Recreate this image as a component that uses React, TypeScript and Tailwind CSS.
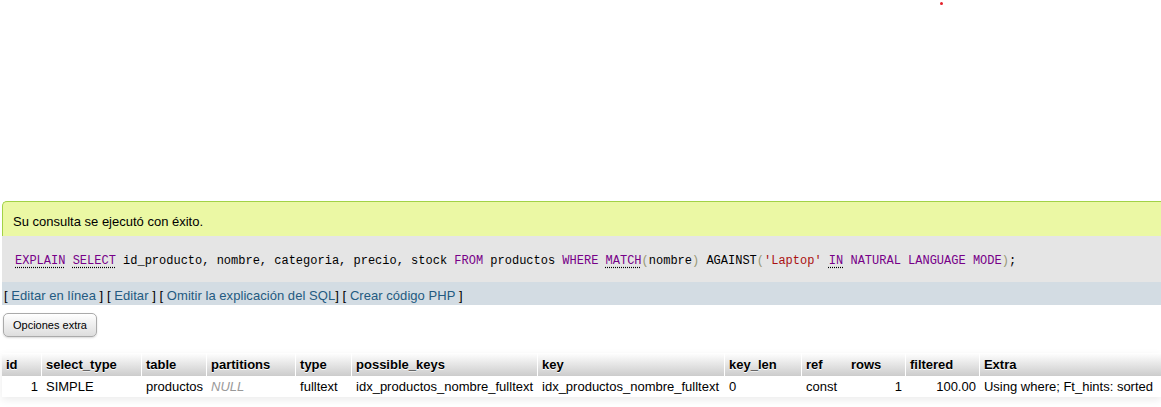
export default function App() {
  const kw = "text-[#770088]";
  const doc = "text-[#770088] underline decoration-dotted decoration-black underline-offset-[3px]";
  const cols: { name: string; w: number; sep: boolean }[] = [
    { name: "id", w: 40, sep: true },
    { name: "select_type", w: 100, sep: true },
    { name: "table", w: 65, sep: true },
    { name: "partitions", w: 89, sep: true },
    { name: "type", w: 56, sep: true },
    { name: "possible_keys", w: 186, sep: true },
    { name: "key", w: 187, sep: true },
    { name: "key_len", w: 77, sep: true },
    { name: "ref", w: 45, sep: false },
    { name: "rows", w: 59, sep: true },
    { name: "filtered", w: 74, sep: true },
    { name: "Extra", w: 181, sep: false },
  ];

  return (
    <div className="relative h-[407px] w-[1161px] overflow-hidden bg-white font-['Liberation_Sans',Arial,sans-serif] text-[13px] text-black">
      {/* stray red dot */}
      <div className="absolute left-[940px] top-[2px] h-[3px] w-[3px] rounded-full bg-[#e4222b]" />

      <div className="pt-[201px]">
        <div className="ml-[2px] w-[1175px]">
          {/* Success message */}
          <div className="h-[35px] rounded-tl-[5px] border-l border-t border-[#a2d246] bg-[#ebf8a4] px-[10px] pt-[12px] leading-[15px]">
            Su consulta se ejecutó con éxito.
          </div>

          {/* SQL */}
          <div className="h-[46px] bg-[#e5e5e5] pl-[13px] pt-[17px] font-['Liberation_Mono',monospace] text-[12px] leading-[16px] whitespace-pre text-black">
            <span>
              <span className={doc}>EXPLAIN</span> <span className={doc}>SELECT</span> id_producto, nombre,
              categoria, precio, stock <span className={kw}>FROM</span> productos{" "}
              <span className={kw}>WHERE</span> <span className={doc}>MATCH</span>
              <span className="text-[#999977]">(</span>nombre<span className="text-[#999977]">)</span> AGAINST
              <span className="text-[#999977]">(</span>
              <span className="text-[#aa1111]">'Laptop'</span> <span className={doc}>IN</span>{" "}
              <span className={kw}>NATURAL</span> <span className={kw}>LANGUAGE</span>{" "}
              <span className={kw}>MODE</span>
              <span className="text-[#999977]">)</span>;
            </span>
          </div>

          {/* Tools */}
          <div className="h-[23px] bg-[#d3dce3] pl-[2px] pt-[6px] leading-[15px] whitespace-pre tracking-[0.05px]">
            [ <span className="text-[#235a81]">Editar en línea</span> ] [{" "}
            <span className="text-[#235a81]">Editar</span> ] [{" "}
            <span className="text-[#235a81]">Omitir la explicación del SQL</span>] [{" "}
            <span className="text-[#235a81]">Crear código PHP</span> ]
          </div>
        </div>

        {/* Options button */}
        <div className="ml-[3px] mt-[8px]">
          <button className="h-[24px] w-[94px] rounded-[5px] border border-[#aaaaaa] bg-linear-to-b from-white to-[#dddddd] text-[11px] shadow-[0_1px_2px_rgba(0,0,0,0.15)]">
            Opciones extra
          </button>
        </div>

        {/* Result table */}
        <table className="ml-[2px] mt-[16px] table-fixed border-separate border-spacing-0 shadow-[0_3px_8px_rgba(0,0,0,0.08)]">
          <colgroup>
            {cols.map((c) => (
              <col key={c.name} style={{ width: c.w }} />
            ))}
          </colgroup>
          <thead>
            <tr>
              {cols.map((c) => (
                <th
                  key={c.name}
                  className={
                    c.sep
                      ? "h-[23px] border-r border-white bg-linear-to-b from-white to-[#cccccc] px-[4px] text-left font-bold [text-shadow:0_1px_0_#fff]"
                      : "h-[23px] bg-linear-to-b from-white to-[#cccccc] px-[4px] text-left font-bold [text-shadow:0_1px_0_#fff]"
                  }
                >
                  {c.name}
                </th>
              ))}
            </tr>
          </thead>
          <tbody>
            <tr className="h-[21px] whitespace-nowrap">
              <td className="px-[4px] text-right">1</td>
              <td className="px-[4px]">SIMPLE</td>
              <td className="px-[4px]">productos</td>
              <td className="px-[4px] italic text-[#999999]">NULL</td>
              <td className="px-[4px]">fulltext</td>
              <td className="px-[4px]">idx_productos_nombre_fulltext</td>
              <td className="px-[4px]">idx_productos_nombre_fulltext</td>
              <td className="px-[4px]">0</td>
              <td className="px-[4px]">const</td>
              <td className="px-[4px] text-right">1</td>
              <td className="px-[4px] text-right">100.00</td>
              <td className="px-[4px]">Using where; Ft_hints: sorted</td>
            </tr>
          </tbody>
        </table>
      </div>
    </div>
  );
}
